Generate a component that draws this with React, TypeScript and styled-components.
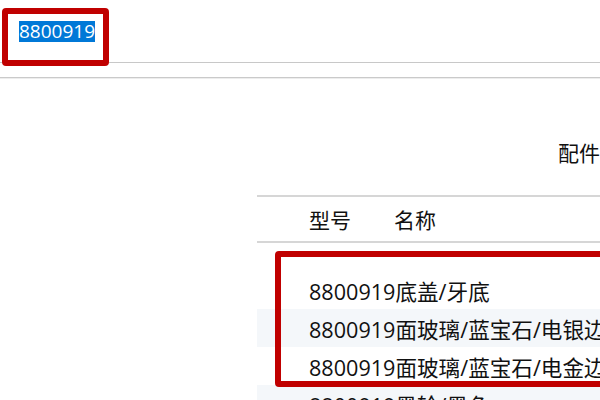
import React from 'react'
import styled, { createGlobalStyle } from 'styled-components'

const GlobalStyle = createGlobalStyle`
  html, body {
    margin: 0;
    padding: 0;
    background: #fff;
    overflow: hidden;
  }
  body {
    font-family: 'Open Sans', 'Noto Sans CJK SC', sans-serif;
    color: #111;
  }
`

const Page = styled.div`
  position: relative;
  width: 600px;
  height: 400px;
  overflow: hidden;
`

const TopBar = styled.div`
  position: relative;
  height: 63px;
  border-bottom: 1px solid #c8c8c8;
  box-sizing: border-box;
  padding: 21px 0 0 19px;
`

const SearchValue = styled.span`
  display: inline-block;
  font-size: 19px;
  line-height: 21px;
  height: 21px;
  background: #0078d7;
  color: #fff;
`

const Annotation = styled.div<{ $top: number; $left: number; $width: number; $height: number }>`
  position: absolute;
  top: ${(p) => p.$top}px;
  left: ${(p) => p.$left}px;
  width: ${(p) => p.$width}px;
  height: ${(p) => p.$height}px;
  box-sizing: border-box;
  border: 6px solid #c00000;
  border-radius: 4px;
  pointer-events: none;
`

const NavBar = styled.div`
  height: 14px;
  border-bottom: 1px solid #cacaca;
  box-shadow: 0 1px 0 #ededed;
`

const Content = styled.div`
  padding-left: 257px;
`

const Title = styled.h2`
  margin: 0;
  height: 117px;
  box-sizing: border-box;
  padding: 61px 0 0 301px;
  font-size: 21px;
  font-weight: 400;
  line-height: 28px;
  white-space: nowrap;
`

const Table = styled.div`
  width: 700px;
`

const HeaderRow = styled.div`
  display: flex;
  align-items: center;
  height: 48px;
  box-sizing: border-box;
  border-top: 2px solid #d6d6d6;
  border-bottom: 2px solid #d6d6d6;
  padding-left: 52px;
  font-size: 21px;
`

const HeaderCell = styled.div<{ $width?: number }>`
  width: ${(p) => (p.$width ? `${p.$width}px` : 'auto')};
  white-space: nowrap;
`

const Body = styled.div`
  position: relative;
  padding-top: 28px;
`

const Row = styled.div<{ $striped: boolean }>`
  display: flex;
  align-items: center;
  height: 38px;
  padding-left: 52px;
  font-size: 21.6px;
  white-space: nowrap;
  background: ${(p) => (p.$striped ? '#f4f7fa' : '#fff')};
`

const rows = [
  '8800919底盖/牙底',
  '8800919面玻璃/蓝宝石/电银边',
  '8800919面玻璃/蓝宝石/电金边',
  '8800919黑轮/黑色',
]

export default function App() {
  return (
    <Page>
      <GlobalStyle />
      <TopBar>
        <SearchValue>8800919</SearchValue>
        <Annotation $top={8} $left={2} $width={107} $height={58} />
      </TopBar>
      <NavBar />
      <Content>
        <Title>配件</Title>
        <Table>
          <HeaderRow>
            <HeaderCell $width={85}>型号</HeaderCell>
            <HeaderCell>名称</HeaderCell>
          </HeaderRow>
          <Body>
            {rows.map((name, i) => (
              <Row key={name} $striped={i % 2 === 1}>
                {name}
              </Row>
            ))}
            <Annotation $top={8} $left={18} $width={400} $height={136} />
          </Body>
        </Table>
      </Content>
    </Page>
  )
}
